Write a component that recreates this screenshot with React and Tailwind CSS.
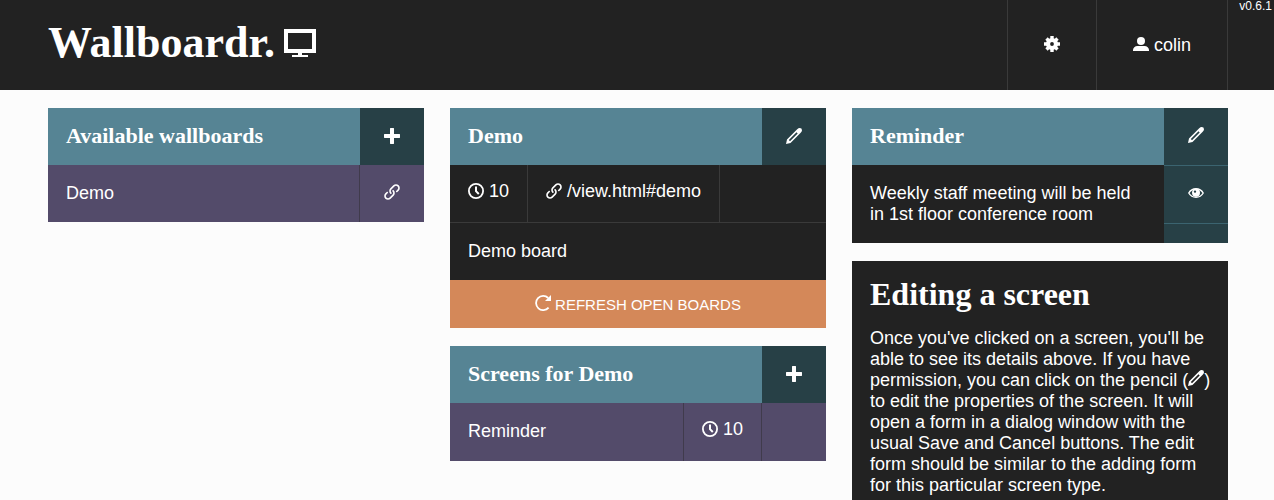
import React from "react";
import { ImLink, ImPlus } from "react-icons/im";

const serif = "font-['Liberation_Serif',serif] font-bold";

function DisplayIcon() {
  return (
    <svg viewBox="0 0 16 16" className="size-8 shrink-0" fill="currentColor" aria-hidden="true">
      <path fillRule="evenodd" d="M0 1h16v12H9v1h3v1H4v-1h3v-1H0zM2 3v8h12V3z" />
    </svg>
  );
}

function GearIcon() {
  return (
    <svg viewBox="0 0 16 16" className="size-4" fill="none" stroke="currentColor" aria-hidden="true">
      <circle cx="8" cy="8" r="4" strokeWidth="4.2" />
      <path strokeWidth="3.4" d="M8 0v4M8 12v4M0 8h4M12 8h4M2.500 2.500l2.600 2.600M10.900 10.900l2.600 2.600M13.500 2.500l-2.600 2.600M5.100 10.900l-2.600 2.600" />
    </svg>
  );
}

function UserIcon() {
  return (
    <svg viewBox="0 0 16 16" className="size-4" fill="currentColor" aria-hidden="true">
      <circle cx="8" cy="4" r="4" />
      <path d="M0 14v-1C0 10.800 2 9 4.500 9h7c2.500 0 4.500 1.800 4.500 4v1z" />
    </svg>
  );
}

function PencilIcon({ className = "size-4" }) {
  return (
    <svg viewBox="0 0 16 16" className={className} fill="currentColor" aria-hidden="true">
      <path
        fillRule="evenodd"
        d="M0 16l1-4.500L11.200 1.300C12 .4 12.900 0 13.700 0A2.300 2.300 0 0 1 16 2.300c0 .8-.4 1.700-1.300 2.500L4.500 15zM4 13.200l7.700-7.700-1.200-1.200L2.800 12z"
      />
    </svg>
  );
}

function ClockIcon() {
  return (
    <svg viewBox="0 0 16 16" className="size-4" fill="none" stroke="currentColor" aria-hidden="true">
      <circle cx="8" cy="8" r="7.100" strokeWidth="1.800" />
      <path d="M8 3.500V8.200L10.800 11" strokeWidth="2" />
    </svg>
  );
}

function RefreshIcon() {
  return (
    <svg viewBox="0 0 16 16" className="size-4" fill="none" aria-hidden="true">
      <path d="M13.600 12.600A7.100 7.100 0 1 1 13.200 3" stroke="currentColor" strokeWidth="1.800" />
      <path d="M16 0v6h-6z" fill="currentColor" />
    </svg>
  );
}

function EyeIcon() {
  return (
    <svg viewBox="0 0 16 16" className="size-4" aria-hidden="true">
      <path d="M.8 8C2.500 5 5 3.700 8 3.700S13.500 5 15.200 8C13.500 11 11 12.300 8 12.300S2.500 11 .8 8z" fill="none" stroke="currentColor" strokeWidth="1.400" />
      <path fillRule="evenodd" fill="currentColor" d="M8 3.800a4 4 0 1 0 0 8 4 4 0 0 0 0-8zM7 5.400a1.200 1.200 0 1 1 0 2.400 1.200 1.200 0 0 1 0-2.400z" />
    </svg>
  );
}

function PanelTitle({ children }) {
  return (
    <h2 className={`${serif} flex h-[57px] min-w-0 flex-1 items-center bg-[#568494] px-[18px] pb-0.5 text-[22px] leading-[21px]`}>
      {children}
    </h2>
  );
}

function PanelAction({ label, children }) {
  return (
    <button type="button" aria-label={label} className="flex h-[57px] w-16 shrink-0 items-center justify-center bg-[#274046] pb-0.5">
      {children}
    </button>
  );
}

function Duration({ value }) {
  return (
    <span className="flex items-center gap-[5px] leading-5">
      <ClockIcon />
      {value}
    </span>
  );
}

export default function App() {
  return (
    <div className="min-h-screen bg-[#fcfcfc] font-['Liberation_Sans',sans-serif] text-[18px] leading-[21px] text-white">
      <header className="relative flex h-[90px] bg-[#222] pr-[46px] pl-12">
        <h1 className={`${serif} mr-auto flex items-center gap-[9px] pb-1 text-[44px] leading-[48px]`}>
          Wallboardr.
          <DisplayIcon />
        </h1>
        <nav className="flex">
          <button type="button" aria-label="Settings" className="flex items-center border-l border-[#3a3a3a] px-9 pb-0.5">
            <GearIcon />
          </button>
          <a href="#user" className="flex items-center gap-[5px] border-x border-[#3a3a3a] px-9">
            <UserIcon />
            colin
          </a>
        </nav>
        <span className="absolute top-0 right-0.5 text-[12px] leading-[13px]">v0.6.1</span>
      </header>

      <main className="grid grid-cols-3 items-start gap-[26px] pt-[18px] pr-[46px] pl-12">
        <section>
          <div className="flex">
            <PanelTitle>Available wallboards</PanelTitle>
            <PanelAction label="Add wallboard"><ImPlus className="size-4" /></PanelAction>
          </div>
          <div className="flex h-[57px] bg-[#534b6a]">
            <a href="#demo" className="flex flex-1 items-center px-[18px]">Demo</a>
            <a href="#link" aria-label="Open Demo" className="flex w-[65px] items-center justify-center border-l border-[#403b4c] pb-1">
              <ImLink className="size-4" />
            </a>
          </div>
        </section>

        <div className="flex flex-col gap-[18px]">
          <section className="bg-[#222]">
            <div className="flex">
              <PanelTitle>Demo</PanelTitle>
              <PanelAction label="Edit board"><PencilIcon /></PanelAction>
            </div>
            <div className="flex h-[58px] border-b border-[#3a3a3a]">
              <div className="flex items-start border-r border-[#3a3a3a] px-[18px] pt-4"><Duration value="10" /></div>
              <a href="#demo" className="flex items-start border-r border-[#3a3a3a] px-[18px] pt-4">
                <span className="flex items-center gap-[5px] leading-5">
                  <ImLink className="size-4" />
                  /view.html#demo
                </span>
              </a>
            </div>
            <p className="p-[18px]">Demo board</p>
            <button type="button" className="flex h-12 w-full items-center justify-center gap-1 bg-[#d48859] text-[15px] uppercase">
              <span className="pb-0.5"><RefreshIcon /></span>
              Refresh open boards
            </button>
          </section>

          <section>
            <div className="flex">
              <PanelTitle>Screens for Demo</PanelTitle>
              <PanelAction label="Add screen"><ImPlus className="size-4" /></PanelAction>
            </div>
            <div className="flex h-[58px] bg-[#534b6a]">
              <a href="#reminder" className="flex-1 px-[18px] pt-[18px]">Reminder</a>
              <div className="flex items-start border-l border-[#403b4c] px-[18px] pt-4"><Duration value="10" /></div>
              <div className="w-[65px] border-l border-[#403b4c]" />
            </div>
          </section>
        </div>

        <div className="flex flex-col gap-[18px]">
          <section className="flex bg-[#222]">
            <div className="flex min-w-0 flex-1 flex-col">
              <div className="flex"><PanelTitle>Reminder</PanelTitle></div>
              <p className="p-[18px]">Weekly staff meeting will be held in 1st floor conference room</p>
            </div>
            <div className="w-16 shrink-0 bg-[#274046]">
              <button type="button" aria-label="Edit screen" className="flex h-[58px] w-full items-center justify-center border-b border-[#3b6470] pb-1">
                <PencilIcon />
              </button>
              <button type="button" aria-label="Preview screen" className="flex h-[58px] w-full items-center justify-center border-b border-[#3b6470] pb-1">
                <EyeIcon />
              </button>
            </div>
          </section>

          <article className="bg-[#222] p-[18px] pr-4">
            <h2 className={`${serif} mb-[18px] text-[32px] leading-[31px]`}>Editing a screen</h2>
            <p>
              Once you've clicked on a screen, you'll be able to see its details above. If you have permission, you can
              click on the pencil (<PencilIcon className="inline size-4 align-baseline" />) to edit the properties of the
              screen. It will open a form in a dialog window with the usual Save and Cancel buttons. The edit form should
              be similar to the adding form for this particular screen type.
            </p>
          </article>
        </div>
      </main>
    </div>
  );
}
